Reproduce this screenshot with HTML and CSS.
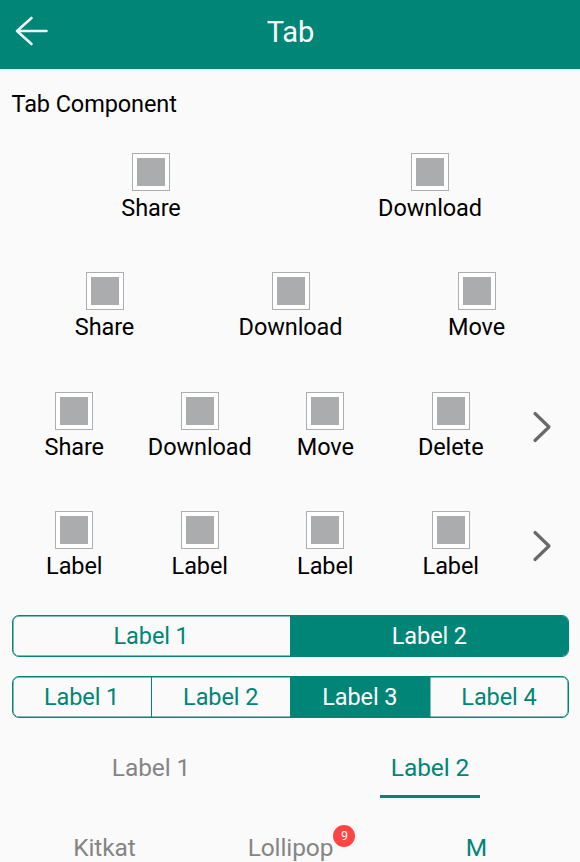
FILE: index.html
```html
<!DOCTYPE html>
<html lang="en">
<head>
<meta charset="utf-8">
<title>Tab</title>
<link rel="stylesheet" href="styles.css">
</head>
<body>
<header class="header">
  <svg class="back" width="34" height="30" viewBox="0 0 34 30"><path d="M16.500 2 2 15 16.500 28M2 15H31.500"/></svg>
  <h1 class="title">Tab</h1>
</header>
<main class="content">
  <h2 class="heading">Tab Component</h2>
  <div class="icon-row">
    <div class="item"><span class="box"></span><span>Share</span></div>
    <div class="item"><span class="box"></span><span>Download</span></div>
  </div>
  <div class="icon-row">
    <div class="item"><span class="box"></span><span>Share</span></div>
    <div class="item"><span class="box"></span><span>Download</span></div>
    <div class="item"><span class="box"></span><span>Move</span></div>
  </div>
  <div class="icon-row">
    <div class="item"><span class="box"></span><span>Share</span></div>
    <div class="item"><span class="box"></span><span>Download</span></div>
    <div class="item"><span class="box"></span><span>Move</span></div>
    <div class="item"><span class="box"></span><span>Delete</span></div>
    <div class="more"><svg width="20" height="32" viewBox="0 0 20 32"><path d="M3 2.500 17 16 3 29.500"/></svg></div>
  </div>
  <div class="icon-row">
    <div class="item"><span class="box"></span><span>Label</span></div>
    <div class="item"><span class="box"></span><span>Label</span></div>
    <div class="item"><span class="box"></span><span>Label</span></div>
    <div class="item"><span class="box"></span><span>Label</span></div>
    <div class="more"><svg width="20" height="32" viewBox="0 0 20 32"><path d="M3 2.500 17 16 3 29.500"/></svg></div>
  </div>
  <div class="segments">
    <div class="segment">Label 1</div>
    <div class="segment active">Label 2</div>
  </div>
  <div class="segments">
    <div class="segment">Label 1</div>
    <div class="segment">Label 2</div>
    <div class="segment active">Label 3</div>
    <div class="segment">Label 4</div>
  </div>
  <div class="tabs">
    <div class="tab"><span class="tab-label">Label 1</span></div>
    <div class="tab current"><span class="tab-label underlined">Label 2</span></div>
  </div>
  <div class="tabs">
    <div class="tab"><span class="tab-label">Kitkat</span></div>
    <div class="tab"><span class="tab-label">Lollipop<span class="badge">9</span></span></div>
    <div class="tab current"><span class="tab-label">M</span></div>
  </div>
</main>
</body>
</html>
```
FILE: styles.css
```css
* { box-sizing: border-box; }
body {
  margin: 0;
  height: 862px;
  overflow: hidden;
  background: #fafafa;
  color: #000;
  font: 23.500px/28px Roboto, sans-serif;
  letter-spacing: -0.1px;
}
svg { display: block; fill: none; stroke-linecap: round; stroke-linejoin: round; }
.header {
  display: grid;
  grid-template-columns: 60px 1fr 60px;
  align-items: center;
  height: 69px;
  padding: 0 0 7px 1px;
  background: #008577;
  color: #fff;
}
.back { margin-left: 14px; stroke: #e8f5f3; stroke-width: 2.6; }
.title { margin: 0; padding-top: 1px; text-align: center; font-size: 29px; line-height: 34px; font-weight: 400; }
.content { padding: 21px 10.500px 0 11.500px; }
.heading { margin: 0 0 35px; font-size: 23.500px; line-height: 28px; font-weight: 400; }
.icon-row { display: flex; height: 70px; margin-bottom: 49.300px; }
.item { flex: 1; display: flex; flex-direction: column; align-items: center; }
.box {
  width: 38px;
  height: 38px;
  margin-bottom: 3px;
  border: 1px solid #adaeae;
  background: #abacad content-box;
  padding: 4px;
  box-shadow: inset 0 0 0 4px #fff;
}
.more { width: 56px; padding-top: 19px; display: flex; justify-content: center; }
.more svg { stroke: #69696b; stroke-width: 3.2; }
.segments {
  display: flex;
  height: 42px;
  margin: 0 0.500px 18.500px 0;
  border: 1px solid #008577;
  border-radius: 7px;
  box-shadow: inset 0 0 0 0.5px #008577;
  overflow: hidden;
  color: #008577;
}
.icon-row + .segments { margin-top: -15px; }
.segment { flex: 1; text-align: center; line-height: 41px; }
.segment + .segment { border-left: 1px solid #008577; }
.segment.active { background: #008577; color: #fff; }
.segment.active + .segment { box-shadow: inset 0.5px 0 #008577; }
.tabs { display: flex; height: 62px; margin-bottom: 18px; color: #858585; font-size: 24.500px; }
.tab { flex: 1; display: flex; justify-content: center; }
.tab.current { color: #008577; }
.tab-label { position: relative; height: 62px; line-height: 64px; }
.underlined { border-bottom: 3px solid #008577; padding: 0 11px; }
.badge {
  position: absolute;
  top: 9px;
  right: -22px;
  width: 22px;
  height: 22px;
  border-radius: 50%;
  background: #ff4444;
  color: #fff;
  font-size: 12.500px;
  line-height: 22px;
  text-align: center;
}
```
